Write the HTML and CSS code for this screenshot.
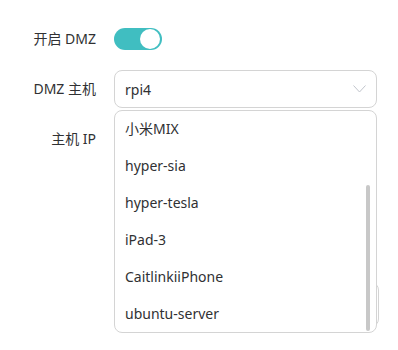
FILE: index.html
```html
<!DOCTYPE html>
<html lang="zh-CN">
<head>
    <meta charset="UTF-8">
    <meta name="viewport" content="width=device-width, initial-scale=1.0">
    <title>DMZ</title>
    <link rel="stylesheet" href="styles.css">
</head>
<body>

<div class="form">
    <label class="form-label">开启 DMZ</label>
    <div class="form-control">
        <span class="switch on"><span class="switch-knob"></span></span>
    </div>

    <label class="form-label">DMZ 主机</label>
    <div class="form-control select-wrap">
        <div class="select">
            <span>rpi4</span>
            <svg class="arrow" width="13" height="8" viewBox="0 0 13 8">
                <path d="M0.5 0.5 L6.5 7 L12.5 0.5" fill="none" stroke="#c0c4cc" stroke-width="1"/>
            </svg>
        </div>
        <div class="dropdown">
            <ul class="options">
                <li>小米MIX</li>
                <li>hyper-sia</li>
                <li>hyper-tesla</li>
                <li>iPad-3</li>
                <li>CaitlinkiiPhone</li>
                <li>ubuntu-server</li>
            </ul>
            <div class="scroll-thumb"></div>
        </div>
    </div>

    <label class="form-label">主机 IP</label>
    <div class="form-control">
        <div class="input"></div>
    </div>

    <div class="spacer"></div>
    <div class="form-control form-control-tall">
        <div class="input input-low"></div>
    </div>
</div>

</body>
</html>
```

FILE: styles.css
```css
html, body {
    min-height: 350px;
}
body {
    margin: 0;
    padding: 0;
    background-color: #fff;
    font-family: "Noto Sans", "Noto Sans CJK SC", sans-serif;
    font-size: 14px;
    color: #303133;
}
.form {
    display: grid;
    grid-template-columns: 96px 263px;
    column-gap: 18px;
    row-gap: 12px;
    padding-top: 20px;
}
.form-label {
    height: 38px;
    line-height: 38px;
    text-align: right;
    white-space: nowrap;
}
.form-control {
    height: 38px;
    display: flex;
    align-items: center;
}
.form-control-tall {
    height: auto;
    display: block;
    padding-top: 112px;
}
.switch {
    position: relative;
    display: inline-block;
    width: 48px;
    height: 22px;
    border-radius: 11px;
    background-color: #dcdfe6;
}
.switch.on {
    background-color: #40bec1;
}
.switch-knob {
    position: absolute;
    top: 1px;
    right: 2px;
    width: 20px;
    height: 20px;
    border-radius: 50%;
    background-color: #fff;
}
.select-wrap {
    position: relative;
    z-index: 2;
}
.select {
    box-sizing: border-box;
    width: 100%;
    height: 38px;
    border: 1px solid #d4d4d4;
    border-radius: 8px;
    padding: 0 10px;
    display: flex;
    align-items: center;
    justify-content: space-between;
}
.input {
    box-sizing: border-box;
    width: 100%;
    height: 38px;
    border: 1px solid #d4d4d4;
    border-radius: 8px;
}
.spacer {
    height: 38px;
}
.input-low {
    width: 265px;
    height: 45px;
}
.dropdown {
    position: absolute;
    z-index: 2;
    top: 40px;
    left: 0;
    box-sizing: border-box;
    width: 263px;
    height: 223px;
    border: 1px solid #d4d4d4;
    border-radius: 8px;
    background-color: #fff;
    overflow: hidden;
}
.options {
    list-style: none;
    margin: 0;
    padding: 0;
}
.options li {
    height: 37px;
    line-height: 35px;
    padding: 0 10px;
    white-space: nowrap;
}
.scroll-thumb {
    position: absolute;
    top: 74px;
    right: 6px;
    width: 4px;
    height: 146px;
    border-radius: 2px;
    background-color: #c8c8c8;
}
```
